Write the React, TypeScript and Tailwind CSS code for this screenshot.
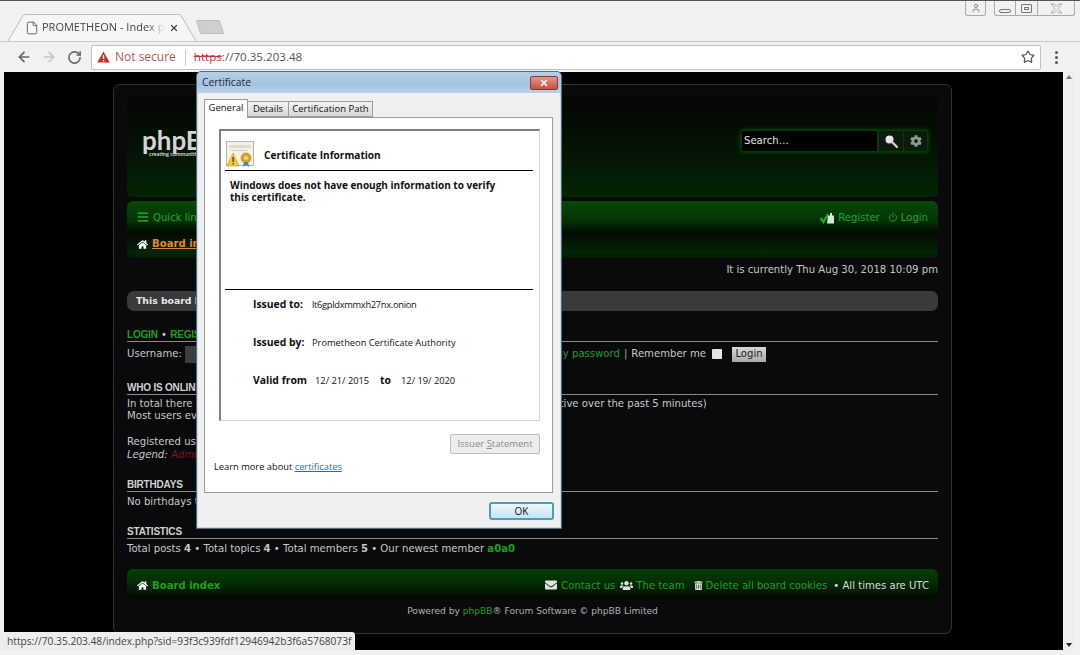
import { ArrowLeft, ArrowRight, RotateCw, Star, File, X, User, Power } from 'lucide-react';
import { FaHome, FaUsers, FaTrashAlt, FaEnvelope, FaCog, FaBars } from 'react-icons/fa';

const GREEN = 'text-[#1f9e1f]';

function SectionTitle({ children, className = '' }: { children: React.ReactNode; className?: string }) {
  return (
    <div className={`mt-[17px] h-[14px] border-b border-[#8a8a8a] font-['Liberation_Sans',sans-serif] text-[10px] font-bold leading-[13px] tracking-[-0.2px] text-[#d0d0d0] ${className}`}>
      {children}
    </div>
  );
}

function RegisterIcon() {
  return (
    <svg width="15" height="13" viewBox="0 0 15 13" className="mr-[3px]">
      <path d="M0.5 7 L3.5 11 L8 3" fill="none" stroke="#22a52a" strokeWidth="2.2" />
      <path d="M8 4.5h6v8H7z M10 2h2v2.5h-2z" fill="#d8e8d8" />
    </svg>
  );
}

function SearchIcon() {
  return (
    <svg width="13" height="13" viewBox="0 0 13 13">
      <circle cx="4.5" cy="4.5" r="4" fill="#e6e6e6" />
      <path d="M7 7 L12 12" stroke="#cfcfcf" strokeWidth="2.4" strokeLinecap="round" />
    </svg>
  );
}

function WarningIcon() {
  return (
    <svg width="13" height="12" viewBox="0 0 13 12">
      <path d="M6.5 0.5 L12.8 11.5 H0.2 Z" fill="#c5302a" />
      <rect x="5.8" y="4" width="1.4" height="4" fill="#fff" />
      <rect x="5.8" y="9" width="1.4" height="1.4" fill="#fff" />
    </svg>
  );
}

function CertIcon() {
  return (
    <svg width="29" height="27" viewBox="0 0 29 27">
      <rect x="0.5" y="0.5" width="27" height="24" fill="#f4f1e6" stroke="#b9b6a6" />
      <rect x="3" y="4" width="22" height="3" fill="#dddcd0" />
      <rect x="5" y="9" width="16" height="1" fill="#d0cec0" />
      <path d="M7 12 L13 25 H1 Z" fill="#f2c73c" stroke="#c09a20" strokeWidth="0.6" />
      <rect x="6.4" y="16" width="1.4" height="5" fill="#5a4410" />
      <rect x="6.4" y="22" width="1.4" height="1.4" fill="#5a4410" />
      <circle cx="20" cy="17" r="5" fill="#d9a52c" stroke="#a97f16" strokeWidth="0.6" />
      <circle cx="20" cy="17" r="2" fill="#f2d77a" />
      <path d="M18 21l-1 5 3-2 3 2-1-5z" fill="#4a7fc4" />
    </svg>
  );
}

function CertRow({ label, value, className = '' }: { label: string; value: React.ReactNode; className?: string }) {
  return (
    <div className={`flex items-baseline pl-[28px] leading-[14px] ${className}`}>
      <span className="w-[59px] text-[10.4px] font-bold">{label}</span>
      <span className="text-[9.3px]">{value}</span>
    </div>
  );
}

function CertificateDialog() {
  return (
    <div className="absolute left-[196px] top-[70px] flex h-[458px] w-[366px] flex-col rounded-t-[5px] border border-[#5b6b78] bg-[linear-gradient(180deg,#b4cfe8_0px,#a6c4e0_12px,#c4d9ec_26px,#c4d9ec_100%)] px-[1px] pb-[1px] font-['Open_Sans',sans-serif] text-[#111]">
      <div className="flex h-[21px] shrink-0 items-center justify-between pl-[4px] pr-[2px] text-[10.3px] text-[#1c2a3a]">
        <span>Certificate</span>
        <span className="flex h-[14px] w-[28px] items-center justify-center rounded-[2px] border border-[#8c3a30] bg-[linear-gradient(180deg,#e0988c,#c9503f)]">
          <X size={10} strokeWidth={3.5} className="text-white" />
        </span>
      </div>
      <div className="flex flex-1 flex-col bg-[#f0f0f0] pl-[6px] pr-[7px] pt-[6px]">
        <div className="flex h-[18px] items-start text-[9.5px]">
          <span className="z-10 flex h-[19px] w-[44px] items-center justify-center border border-b-0 border-[#9c9c9c] bg-white pb-[1px]">General</span>
          <span className="mt-[2px] flex h-[16px] w-[41px] items-center justify-center border-y border-r border-[#9c9c9c] bg-[linear-gradient(180deg,#f2f2f2,#d8d8d8)]">Details</span>
          <span className="mt-[2px] flex h-[16px] w-[84px] items-center justify-center border-y border-r border-[#9c9c9c] bg-[linear-gradient(180deg,#f2f2f2,#d8d8d8)]">Certification Path</span>
        </div>
        <div className="flex h-[376px] flex-col border border-[#9c9c9c] bg-white pl-[14px] pr-[12px] pt-[11px]">
          <div className="flex h-[292px] shrink-0 flex-col border-b border-r border-[#d8d8d8] border-l-2 border-l-[#808080] border-t-2 border-t-[#808080] pl-[4px] pr-[6px] pt-[8px]">
            <div className="flex h-[32px] shrink-0 items-center border-b border-black pl-[1px]">
              <CertIcon />
              <span className="ml-[9px] mt-[2px] text-[10.1px] font-bold">Certificate Information</span>
            </div>
            <div className="mt-[8px] h-[111px] shrink-0 border-b border-black pl-[5px] text-[10px] font-bold leading-[12px]">
              Windows does not have enough information to verify
              <br />
              this certificate.
            </div>
            <CertRow className="mt-[7px]" label="Issued to:" value={<span className="tracking-[-0.3px]">lt6gpldxmmxh27nx.onion</span>} />
            <CertRow className="mt-[23px]" label="Issued by:" value="Prometheon Certificate Authority" />
            <div className="mt-[23px] flex items-baseline pl-[28px] leading-[14px]">
              <span className="w-[62px] text-[10.4px] font-bold">Valid from</span>
              <span className="w-[65px] text-[9.3px]">12/ 21/ 2015</span>
              <span className="w-[21px] text-[10.4px] font-bold">to</span>
              <span className="text-[9.3px]">12/ 19/ 2020</span>
            </div>
          </div>
          <div className="mt-[13px] flex justify-end">
            <span className="flex h-[20px] w-[90px] items-center justify-center rounded-[2px] border border-[#bdbdbd] bg-[#ececec] text-[9.5px] text-[#8a8a8a]">
              Issuer&nbsp;<span className="underline">S</span>tatement
            </span>
          </div>
          <div className="ml-[-5px] mt-[6px] text-[9.3px] leading-[14px]">
            Learn more about <span className="text-[#1f6fb5] underline">certificates</span>
          </div>
        </div>
        <div className="-mr-px flex justify-end pt-[9px]">
          <span className="flex h-[18px] w-[65px] items-center justify-center rounded-[3px] border-2 border-[#4d9cb8] bg-[linear-gradient(180deg,#eef7fc,#c6e4f5)] text-[10px]">
            OK
          </span>
        </div>
      </div>
    </div>
  );
}

function Forum() {
  return (
    <div className="ml-[109px] mt-[12px] h-[550px] w-[839px] rounded-[7px] border border-[#333] bg-[#0a0a0c] px-[13px] pt-[12px] font-['DejaVu_Sans',sans-serif] text-[10.1px] text-[#c8c8c8]">
      <div className="flex h-[100px] items-start justify-between rounded-[5px] bg-[linear-gradient(180deg,#040604_0%,#031003_40%,#042404_100%)] pl-[15px] pr-[10px] pt-[33px]">
        <div className="-mt-px flex flex-col font-['Lato',sans-serif] text-[#d4d4d4]">
          <span className="text-[26px] font-bold leading-[22px]">phpBB</span>
          <span className="ml-[7px] whitespace-nowrap text-[5.5px] font-bold leading-[6px]">creating communities</span>
        </div>
        <div className="flex h-[22px] items-stretch rounded-[2px] bg-[#063a06] p-[1px] shadow-[0_0_4px_#0b5c0b]">
          <span className="flex w-[135px] items-center bg-black pl-[2px] text-[#e0e0e0]">Search…</span>
          <span className="ml-[2px] flex w-[24px] items-center justify-center bg-[#0b1c0b]">
            <SearchIcon />
          </span>
          <span className="ml-[1px] flex w-[23px] items-center justify-center bg-[#0b1c0b]">
            <FaCog size={12} className="text-[#8d9a8d]" />
          </span>
        </div>
      </div>

      <div className="mt-[4px] h-[57px] rounded-[6px] bg-[linear-gradient(180deg,#064a06_0px,#053205_20px,#020b02_32px,#052405_52px,#041a04_57px)] px-[10px] text-[#22a52a]">
        <div className="flex h-[31px] items-center justify-between pt-[2px]">
          <span className="flex items-center gap-[4px]">
            <FaBars size={12} /> Quick links
          </span>
          <span className="flex items-center">
            <RegisterIcon />
            <span className="mr-[8px]">Register</span>
            <Power size={10} className="mr-[3px]" />
            Login
          </span>
        </div>
        <div className="flex h-[22px] items-center gap-[4px] pt-[2px]">
          <FaHome size={11} className="text-white" />
          <span className="font-bold text-[#e0892a] underline">Board index</span>
        </div>
      </div>

      <div className="mt-[2px] h-[22px] pt-[2px] text-right leading-[16px]">
        It is currently Thu Aug 30, 2018 10:09 pm
      </div>

      <div className="mt-[9px] flex h-[20px] items-center rounded-[7px] bg-[#3a3a3c] pl-[9px] text-[9.3px] font-bold text-[#e6e6e6]">
        This board has no forums.
      </div>

      <SectionTitle>
        <span className={GREEN}>
          LOGIN <span className="mx-[2px] text-[#c8c8c8]">•</span> REGISTER
        </span>
      </SectionTitle>

      <div className="mt-[2px] flex h-[20px] items-center whitespace-nowrap">
        <span>Username:</span>
        <span className="ml-[3px] h-[17px] w-[120px] bg-[#3d3d3d]" />
        <span className={`ml-auto mr-[4px] ${GREEN}`}>I forgot my password</span>
        <span className="mr-[4px] text-[#aaa]">|</span>
        <span>Remember me</span>
        <span className="ml-[6px] h-[10px] w-[10px] rounded-[1px] bg-[#e4e4e4]" />
        <span className="ml-[10px] mr-[172px] flex h-[15px] w-[34px] items-center justify-center bg-[linear-gradient(180deg,#d8d8d8,#a8a8a8)] text-[#222]">Login</span>
      </div>

      <SectionTitle>WHO IS ONLINE</SectionTitle>
      <div className="mt-[3px] whitespace-nowrap leading-[12px]">
        In total there is 1 user online :: 0 registered, 0 hidden and 1 guest (based on users active over the past 5 minutes)
        <br />
        Most users ever online was 23 on Aug 29, 2018
      </div>
      <div className="mt-[13px] leading-[13px]">
        Registered users: No registered users
        <br />
        <em>
          Legend: <span className="text-[#7a1616]">Administrators</span>
        </em>
      </div>

      <SectionTitle>BIRTHDAYS</SectionTitle>
      <div className="mt-[3px] leading-[13px]">No birthdays today</div>

      <SectionTitle>STATISTICS</SectionTitle>
      <div className="mt-[3px] leading-[13px]">
        Total posts <b>4</b> • Total topics <b>4</b> • Total members <b>5</b> • Our newest member <b className={GREEN}>a0a0</b>
      </div>

      <div className={`mt-[14px] flex h-[30px] items-center justify-between rounded-[6px] bg-[linear-gradient(180deg,#054005,#042a04_50%,#020802)] pl-[10px] pr-[9px] pt-[3px] ${GREEN}`}>
        <span className="flex items-center gap-[4px] font-bold">
          <FaHome size={11} className="text-white" /> Board index
        </span>
        <span className="flex items-center">
          <FaEnvelope size={12} className="mr-[4px] text-[#e0e0e0]" />
          <span className="mr-[5px]">Contact us</span>
          <FaUsers size={13} className="mr-[3px] text-[#e0e0e0]" />
          <span className="mr-[9px]">The team</span>
          <FaTrashAlt size={9} className="mr-[3px] text-[#e0e0e0]" />
          <span className="mr-[6px]">Delete all board cookies</span>
          <span className="text-[#d8d8d8]">• All times are UTC</span>
        </span>
      </div>

      <div className="mt-[6px] text-center text-[9.1px] leading-[12px] text-[#b0b0b0]">
        Powered by <span className={GREEN}>phpBB</span>® Forum Software © phpBB Limited
      </div>
    </div>
  );
}

export default function App() {
  return (
    <div className="relative flex h-[655px] w-[1080px] flex-col overflow-hidden border-t border-[#555] bg-[#f1f1f1] font-['Open_Sans',sans-serif]">
      {/* tab strip */}
      <div className="flex h-[40px] shrink-0 items-start justify-between pl-[8px] pr-[5px]">
        <div className="mt-[13px] flex items-start">
          <div className="relative flex h-[27px] w-[188px] items-center pl-[17px] text-[11px] text-[#444]">
            <svg width="188" height="27" viewBox="0 0 188 27" className="absolute left-0 top-0">
              <path d="M0 27 L15 1.5 Q16 0.5 18 0.5 H170 Q172 0.5 173 1.5 L188 27" fill="#f6f6f6" stroke="#bdbdbd" />
            </svg>
            <File size={14} strokeWidth={1.5} className="relative mr-[3px] text-[#555]" />
            <span className="relative w-[123px] overflow-hidden whitespace-nowrap [mask-image:linear-gradient(90deg,#000_85%,transparent)]">PROMETHEON - Index page</span>
            <X size={10} strokeWidth={3} className="relative ml-[4px] text-[#444]" />
          </div>
          <div className="ml-[2px] mt-[6px] h-[14px] w-[24px] skew-x-[18deg] rounded-[2px] border border-[#bbb] bg-[#cfcfcf]" />
        </div>
        <div className="flex h-[15px] items-stretch text-[#777]">
          <span className="flex w-[21px] items-center justify-center rounded-b-[3px] border border-t-0 border-[#aaa]">
            <User size={10} />
          </span>
          <span className="ml-[8px] flex w-[22px] items-center justify-center rounded-bl-[3px] border border-t-0 border-[#aaa] pt-[5px]">
            <span className="h-[4px] w-[12px] rounded-[2px] border border-[#777]" />
          </span>
          <span className="flex w-[22px] items-center justify-center border-b border-r border-[#aaa]">
            <span className="flex h-[9px] w-[11px] items-center justify-center rounded-[1px] border border-[#777]">
              <span className="h-[3px] w-[5px] border border-[#777]" />
            </span>
          </span>
          <span className="flex w-[37px] items-center justify-center rounded-br-[3px] border-b border-r border-[#aaa]">
            <svg width="13" height="11" viewBox="0 0 13 11">
              <path d="M1 1h3l2.5 2.5L9 1h3L8 5.5l4 4.5H9L6.5 7.5 4 10H1l4-4.5z" fill="#f1f1f1" stroke="#aaa" />
            </svg>
          </span>
        </div>
      </div>

      {/* toolbar */}
      <div className="flex h-[31px] shrink-0 items-center border-t border-[#c8c8c8] pl-[16px] pr-[22px]">
        <ArrowLeft size={16} strokeWidth={2.5} className="text-[#666]" />
        <ArrowRight size={16} strokeWidth={2.5} className="ml-[9px] text-[#c6c6c6]" />
        <RotateCw size={15} strokeWidth={2.5} className="ml-[10px] text-[#666]" />
        <div className="ml-[9px] flex h-[25px] flex-1 items-center rounded-[2px] border border-[#c0c0c0] bg-white px-[5px] text-[12px]">
          <WarningIcon />
          <span className="ml-[5px] text-[#b4545a]">Not secure</span>
          <span className="ml-[9px] h-[17px] w-px bg-[#ccc]" />
          <span className="ml-[8px] text-[11.6px] text-[#c9323a] line-through">https</span>
          <span className="text-[11.6px] text-[#555]">://70.35.203.48</span>
          <Star size={14} strokeWidth={2} className="ml-auto text-[#555]" />
        </div>
        <span className="ml-[14px] flex flex-col gap-[2px]">
          <span className="h-[3px] w-[3px] rounded-full bg-[#555]" />
          <span className="h-[3px] w-[3px] rounded-full bg-[#555]" />
          <span className="h-[3px] w-[3px] rounded-full bg-[#555]" />
        </span>
      </div>

      {/* page + scrollbar */}
      <div className="flex h-[578px] shrink-0 pl-[4px] pr-[5px]">
        <div className="flex-1 bg-black">
          <Forum />
        </div>
        <div className="flex w-[12px] flex-col items-center justify-between bg-[#efefef] py-[3px]">
          <span className="h-0 w-0 border-x-[3px] border-b-[4px] border-x-transparent border-b-[#777]" />
          <span className="h-0 w-0 border-x-[3px] border-t-[4px] border-x-transparent border-t-[#222]" />
        </div>
      </div>

      <CertificateDialog />

      <div className="absolute bottom-[4px] left-0 flex h-[19px] items-center rounded-tr-[3px] bg-[#ededed] pl-[7px] pr-[4px] text-[10.2px] text-[#444]">
        https://70.35.203.48/index.php?sid=93f3c939fdf12946942b3f6a5768073f
      </div>
    </div>
  );
}
